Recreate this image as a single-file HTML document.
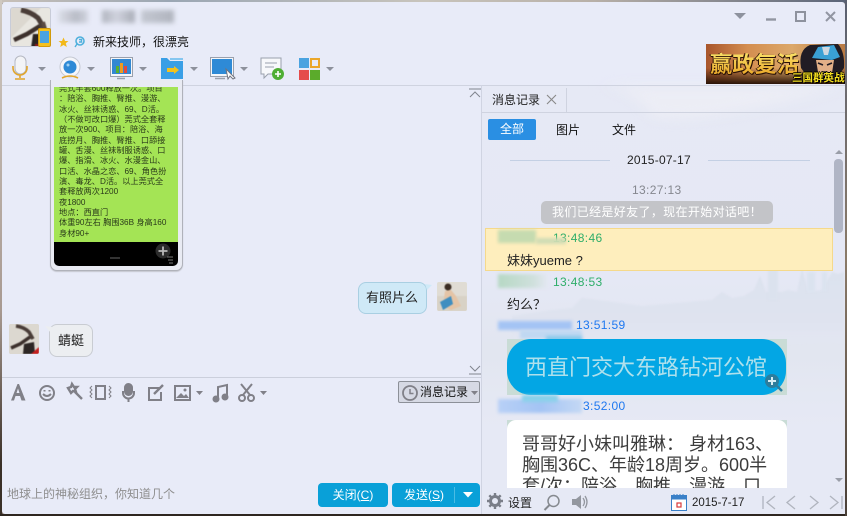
<!DOCTYPE html>
<html lang="zh">
<head>
<meta charset="utf-8">
<style>
html,body{margin:0;padding:0;width:847px;height:516px;overflow:hidden;background:#7a6a60;}
*{box-sizing:border-box;}
body{font-family:"Liberation Sans","Noto Sans CJK SC",sans-serif;font-size:12px;color:#222;position:relative;}
.a{position:absolute;white-space:nowrap;}
svg{position:absolute;overflow:visible;}
.blur{position:absolute;filter:blur(2px);}
.t{letter-spacing:.35px;}
</style>
</head>
<body>
<div class="a" style="left:0;top:0;width:847px;height:3px;background:linear-gradient(90deg,#c8c0b8,#9aa6b4 20%,#c8c4bc 50%,#b8b0a8 70%,#5a6478 100%)"></div>
<div class="a" style="left:0;top:0;width:2px;height:516px;background:linear-gradient(#cfc8c0,#a89a92 60%,#3a3028 90%)"></div>
<div class="a" style="left:0;top:514px;width:847px;height:2px;background:#2e2620"></div>
<div class="a" style="left:845px;top:0;width:2px;height:516px;background:linear-gradient(#5a6070,#8a7a68 50%,#4a4038)"></div>

<!-- window -->
<div class="a" style="left:2px;top:2px;width:843px;height:512px;background:#e8ebf8;border-radius:3px"></div>
<!-- right panel bg -->
<div class="a" style="left:482px;top:86px;width:363px;height:428px;background:linear-gradient(#e6e9f5,#e5e8f5 45%,#e2e6f0 62%,#e6e9f5 80%)"></div>
<svg style="left:482px;top:86px" width="363" height="428">
<defs><linearGradient id="sky" x1="0" y1="0" x2="0" y2="1"><stop offset="0" stop-color="#dbe2ee"/><stop offset=".7" stop-color="#dfe3ef"/><stop offset="1" stop-color="#e2e6f1" stop-opacity="0"/></linearGradient></defs>
<path d="M30 230 L70 224 L90 222 L100 212 L160 220 L230 214 L240 206 L250 212 L262 210 L272 204 L278 190 L284 206 L300 206 L306 204 L315 206 L320 182 L326 206 L340 204 L350 186 L356 188 L362 186 L362 258 L30 262Z" fill="url(#sky)" style="filter:blur(.8px)"/>
<path d="M262 214L286 214 286 178 296 178 296 214Z" fill="#dbe2ee" style="filter:blur(1px)"/>
<path d="M340 205V186h5v19zM325 206V186h8v20z" fill="#dbe3ef" style="filter:blur(1px)"/>
<path d="M110 0 Q150 0 170 30 Q220 40 363 0Z" fill="#ecedf5" style="filter:blur(6px)"/>
</svg>
<div class="a" style="left:2px;top:85px;width:843px;height:1px;background:#cfd3e0"></div>
<div class="a" style="left:481px;top:85px;width:1px;height:429px;background:#d0d4e2"></div>

<!-- avatar -->
<div class="a" style="left:10px;top:7px;width:41px;height:40px;background:#dfdcd6;border:1px solid #c8ccd8;border-radius:3px;overflow:hidden">
<svg width="41" height="40" style="left:0;top:0;filter:blur(.5px)"><rect width="41" height="40" fill="#dcd8d0"/><path d="M0 30L30 0H41V40H0Z" fill="#e8e6e0"/>
<path d="M10 2Q20 4 27 10L33 20" fill="none" stroke="#4a3d38" stroke-width="5"/>
<path d="M29 18L16 26 3 32" fill="none" stroke="#3c302c" stroke-width="4.500"/>
<path d="M32 14L36 28" fill="none" stroke="#5a4a42" stroke-width="4"/>
<path d="M22 26L34 26 36 40 20 40Z" fill="#2a2422"/><path d="M24 36H32V40H24Z" fill="#8c1e1e"/></svg>
</div>
<div class="a" style="left:38px;top:28px;width:13px;height:19px;background:#f4c01e;border-radius:2px;border:1px solid #d09a0c"></div>
<div class="a" style="left:40px;top:31px;width:9px;height:12px;background:#4aa3e0"></div>

<!-- blurred name -->
<div class="blur" style="left:58px;top:10px;width:30px;height:13px;background:linear-gradient(90deg,#dcdfe9,#b8bcc6 60%,#d0d3de);filter:blur(2.500px)"></div>
<div class="blur" style="left:102px;top:10px;width:33px;height:13px;background:linear-gradient(90deg,#b0b4be,#d0d3de 45%,#a8acb6);filter:blur(2.500px)"></div>
<div class="blur" style="left:141px;top:10px;width:33px;height:13px;background:linear-gradient(90deg,#c4c8d2,#b0b4be);filter:blur(2.500px)"></div>

<!-- status icons -->
<svg style="left:58px;top:37px" width="11" height="11" viewBox="0 0 11 11"><path d="M5.500 .5L7 4H10.500L7.800 6.300 8.800 10 5.500 8 2.200 10 3.200 6.300 .5 4H4Z" fill="#f2b91a"/></svg>
<svg style="left:74px;top:36px" width="11" height="12" viewBox="0 0 11 12"><circle cx="6" cy="5" r="4" fill="none" stroke="#4fb0dc" stroke-width="1.600"/><path d="M3 8L1 11M5 3.500h2.500v2.500H5" fill="none" stroke="#4fb0dc" stroke-width="1.400"/></svg>
<div class="a" style="left:93px;top:34px;font-size:12px;line-height:16px;color:#111">新来技师，很漂亮</div>

<!-- top toolbar -->
<svg style="left:0;top:52px" width="340" height="30" viewBox="0 0 340 30">
<rect x="15" y="4" width="11" height="18" rx="5.500" fill="#f3f4f7" stroke="#b5b8c2"/>
<path d="M13 14v2a7 7 0 0 0 14 0v-2M20 23v3M15 27h10" fill="none" stroke="#e0a52b" stroke-width="1.600"/>
<path d="M38 15h8l-4 4z" fill="#8d919c"/>
<circle cx="70" cy="15" r="10" fill="#f5f6fa" stroke="#c4c8d2"/><circle cx="70" cy="15" r="6.500" fill="#2e8ad6"/><circle cx="68" cy="13" r="1.500" fill="#9fd0f2"/>
<path d="M62 26q8-4 16 0" fill="none" stroke="#e0a52b" stroke-width="1.600"/>
<path d="M87 15h8l-4 4z" fill="#8d919c"/>
<rect x="110.500" y="5.500" width="22" height="19" fill="#f4f6fa" stroke="#9aa0ac"/><rect x="112" y="7" width="19" height="15" fill="#3388d2"/>
<rect x="116" y="14" width="3" height="7" fill="#5ab030"/><rect x="120" y="11" width="3" height="10" fill="#f09a1e"/><rect x="124" y="14" width="3" height="7" fill="#e24a3e"/>
<path d="M117 26.500h8" stroke="#9aa0ac" stroke-width="1.500"/>
<path d="M139 15h8l-4 4z" fill="#8d919c"/>
<path d="M161 6h6l3 3h13v18h-22z" fill="#3a9fe6"/><path d="M170 6h13v2h-13z" fill="#85c6f0"/>
<path d="M167 16h7v-2l5 4-5 4v-2h-7z" fill="#f4c21e"/>
<path d="M190 15h8l-4 4z" fill="#8d919c"/>
<rect x="210.500" y="5.500" width="23" height="19" fill="#f4f6fa" stroke="#9aa0ac"/><rect x="212" y="7" width="20" height="15" fill="#2e8ad6"/>
<path d="M226 17l9 9-2 1-3-3-2 3z" fill="#fff" stroke="#707480"/>
<path d="M215 26.500h10" stroke="#9aa0ac" stroke-width="1.500"/>
<path d="M240 15h8l-4 4z" fill="#8d919c"/>
<path d="M261 6h20v16h-13l-4 4v-4h-3z" fill="#f7f8fb" stroke="#9aa0ac"/><path d="M265 11h12M265 15h9" stroke="#9aa0ac"/>
<circle cx="278" cy="22" r="6" fill="#4fae34"/><path d="M275 22h6M278 19v6" stroke="#fff" stroke-width="1.600"/>
<path d="M326 15h8l-4 4z" fill="#8d919c"/>
<rect x="299" y="6" width="10" height="10" fill="#4aa3e0"/><rect x="311" y="7" width="8" height="8" fill="none" stroke="#eba72a" stroke-width="2"/><rect x="299" y="18" width="10" height="10" fill="#e54b4b"/><rect x="310" y="18" width="10" height="10" fill="#5bab2b"/>
</svg>

<!-- window controls -->
<svg style="left:730px;top:8px" width="110" height="20">
<path d="M4 5h12l-6 6z" fill="#8e929e"/>
<path d="M36 11.500h10" stroke="#9296a2" stroke-width="2.400"/>
<rect x="66" y="4" width="9" height="9" fill="none" stroke="#8e929e" stroke-width="2"/>
<path d="M96 4l9 9M105 4l-9 9" stroke="#9296a2" stroke-width="2"/>
</svg>

<!-- banner -->
<div class="a" style="left:706px;top:44px;width:139px;height:40px;overflow:hidden;background:linear-gradient(90deg,#a8552c,#d48e50 30%,#dca86a 62%,#b87a44);">
<div class="a" style="left:0;top:24px;width:139px;height:16px;background:linear-gradient(rgba(58,28,12,0),#2a1408)"></div>
<div class="a" style="left:4px;top:8px;font-size:22px;line-height:26px;font-weight:bold;letter-spacing:.3px;background:linear-gradient(#fbe36a,#e8a020);-webkit-background-clip:text;background-clip:text;color:transparent;filter:drop-shadow(1px 1px 0 #2a1206) drop-shadow(-1px 0 0 #2a1206)">赢政复活</div>
<svg style="left:92px;top:0" width="47" height="40" viewBox="0 0 47 40">
<path d="M3 24Q0 6 12 1L40 0Q47 8 46 24L36 38 12 36Z" fill="#201c24"/>
<path d="M14 14L20 3 36 1 42 13 34 16 24 15Z" fill="#3aa0d4"/>
<path d="M24 3h8l-2 8h-4z" fill="#cfd8e0"/>
<path d="M18 16h18l-2 13-7 4-7-5z" fill="#e2b088"/>
<path d="M20 19l5 2M29 21l5-2M24 28h5" stroke="#201c24" stroke-width="1.600"/>
</svg>
<div class="a" style="left:86px;top:28px;font-size:10.500px;line-height:12px;font-weight:bold;color:#f6e020;text-shadow:1px 1px 0 #000,-1px 0 0 #000,0 -1px 0 #000">三国群英战</div>
</div>

<!-- chat: image card -->
<div class="a" style="left:50px;top:80px;width:133px;height:191px;background:#e9ebf3;border:1.500px solid #b0b2ba;border-top:0;border-radius:0 0 7px 7px;box-shadow:0 1px 1px #c4c6cf"></div>
<div class="a" style="left:54px;top:87px;width:124px;height:179px;background:#000;border-radius:0 0 5px 5px;overflow:hidden">
<div class="a" style="left:0;top:0;width:124px;height:155px;background:#a4e455"></div>
<div class="a" style="left:5px;top:-3px;font-size:8.200px;line-height:10.350px;color:#2a3a1a;white-space:pre">莞式半套600释放一次。项目
：陪浴、胸推、臀推、漫游、
冰火、丝袜诱惑、69、D活。
（不做可改口爆）莞式全套释
放一次900、项目：陪浴、海
底捞月、胸推、臀推、口舔接
罐、舌漫、丝袜制服诱惑、口
爆、指滑、冰火、水漫金山、
口活、水晶之恋、69、角色扮
演、毒龙、D活。以上莞式全
套释放两次1200
夜1800
地点：西直门
体重90左右 胸围36B 身高160
身材90+</div>
<div class="a" style="left:56px;top:170px;width:10px;height:2px;background:#333"></div>
<svg style="left:100px;top:155px" width="22" height="22"><circle cx="9" cy="9" r="7.500" fill="#2c2c2c"/><path d="M4.500 9h9M9 4.500v9" stroke="#b8b8b8" stroke-width="1.800"/><path d="M13 15h6M14 18h5M15 21h4" stroke="#777"/></svg>
</div>

<!-- chat scroll chevrons -->
<svg style="left:468px;top:88px" width="14" height="12"><path d="M1 1h12M2 9l5-5 5 5" fill="none" stroke="#80848e"/></svg>
<svg style="left:468px;top:364px" width="14" height="12"><path d="M1 10h12M2 2l5 5 5-5" fill="none" stroke="#80848e"/></svg>

<!-- bubbles -->
<div class="a" style="left:358px;top:282px;width:69px;height:32px;background:#cfe9f7;border:1px solid #a9cfe2;border-radius:8px;line-height:30px;padding-left:7px;font-size:13px;color:#222">有照片么</div>
<svg style="left:425px;top:282px" width="8" height="8"><path d="M0 2L7 3 2 8Z" fill="#cfe9f7"/></svg>
<div class="a" style="left:437px;top:282px;width:30px;height:29px;background:#e2dfd8;border-radius:2px;overflow:hidden">
<svg width="30" height="29" style="left:0;top:0;filter:blur(.6px)"><rect width="30" height="29" fill="#e0dcd4"/><rect y="14" width="30" height="15" fill="#d8d2c6"/><circle cx="11" cy="5" r="3.500" fill="#3a2c22"/><path d="M8 9L14 8 19 14 24 24 14 28 6 24Z" fill="#e4c4a6"/><path d="M3 20L14 14 16 22 6 28Z" fill="#3f8ec0"/></svg>
</div>

<div class="a" style="left:9px;top:324px;width:30px;height:30px;background:#d8d4cc;border-radius:2px;overflow:hidden">
<svg width="30" height="30" style="left:0;top:0;filter:blur(.5px)"><rect width="30" height="30" fill="#dcd8d0"/>
<path d="M7 2Q15 3 20 8L24 15" fill="none" stroke="#4a3d38" stroke-width="3.500"/>
<path d="M21 13L11 20 2 24" fill="none" stroke="#3c302c" stroke-width="3.500"/>
<path d="M15 20L25 18 26 30H14Z" fill="#2c2624"/><path d="M22 30L30 23 30 30Z" fill="#c42020"/></svg>
</div>
<div class="a" style="left:49px;top:324px;width:44px;height:33px;background:#eceef1;border:1px solid #c9ccd2;border-radius:8px;line-height:31px;padding-left:8px;font-size:13px;color:#222">蜻蜓</div>
<svg style="left:45px;top:326px" width="7" height="8"><path d="M0 0L7 1 6 7Z" fill="#eceef1"/></svg>

<!-- input divider -->
<div class="a" style="left:2px;top:377px;width:479px;height:1px;background:#cbcfdc"></div>

<!-- input toolbar -->
<svg style="left:0;top:381px" width="280" height="24" viewBox="0 0 280 24" fill="none" stroke="#808088" stroke-width="2">
<path d="M11 19.500L17.500 3h1.500l6.500 16.500h-4L20 15h-4.500l-1.500 4.500zM16.500 12h3l-1.500-4.500z" fill="#808088" stroke="none" fill-rule="evenodd"/>
<circle cx="47" cy="12" r="7"/><path d="M43 13q4 4 8 0"/><path d="M44.500 9v1.500M49.500 9v1.500"/>
<path d="M68 7l3-1 1-3 2 3 3 0-2 2 1 3-3-1-2 2zM75 11l7 7" stroke-width="2.400"/>
<rect x="96" y="5" width="9" height="13" stroke-width="2"/><path d="M92 5l-2 2 2 2-2 2 2 2-2 2 2 2M109 5l2 2-2 2 2 2-2 2 2 2-2 2" stroke-width="1"/>
<rect x="125" y="3" width="7" height="11" rx="3.500" fill="#808088"/><path d="M123 10v2a5.500 5.500 0 0 0 11 0v-2M128.500 18v3"/>
<path d="M160 7h-11v12h12v-8"/><path d="M154 13l9-9" stroke-width="2.400"/>
<rect x="175" y="5" width="15" height="14"/><path d="M176 17l5-5 3 3 2-2 3 4z" fill="#808088" stroke="none"/><circle cx="185" cy="9" r="1.500" fill="#808088" stroke="none"/>
<path d="M196 10h7l-3.500 4z" fill="#808088" stroke="none"/>
<path d="M218 18V6l9-2v12"/><circle cx="216" cy="18" r="2.500" fill="#808088"/><circle cx="225" cy="16" r="2.500" fill="#808088"/>
<circle cx="242" cy="17" r="3"/><circle cx="251" cy="17" r="3"/><path d="M243 14l9-11M250 14l-9-11"/>
<path d="M260 10h7l-3.500 4z" fill="#808088" stroke="none"/>
</svg>

<!-- history button -->
<div class="a" style="left:398px;top:381px;width:82px;height:22px;background:#d6d9e4;border:1px solid #8c9098;border-radius:2px"></div>
<svg style="left:401px;top:384px" width="17" height="17"><circle cx="9" cy="9" r="7" fill="none" stroke="#808088" stroke-width="1.800"/><path d="M9 5v4.500h3.500" fill="none" stroke="#808088" stroke-width="1.500"/></svg>
<div class="a" style="left:420px;top:385px;font-size:12px;line-height:15px;color:#111">消息记录</div>
<svg style="left:470px;top:390px" width="9" height="6"><path d="M1 1h7L4.500 5z" fill="#808088"/></svg>

<!-- hint + buttons -->
<div class="a" style="left:7px;top:486px;font-size:12px;line-height:16px;color:#8e8e8e">地球上的神秘组织，你知道几个</div>
<div class="a" style="left:318px;top:483px;width:70px;height:24px;background:#09a0d8;border-radius:4px;color:#fff;text-align:center;line-height:24px;font-size:12px">关闭(<u>C</u>)</div>
<div class="a" style="left:392px;top:483px;width:88px;height:24px;background:#09a0d8;border-radius:4px;color:#fff;line-height:24px;font-size:12px;padding-left:12px">发送(<u>S</u>)</div>
<div class="a" style="left:454px;top:487px;width:1px;height:16px;background:#4bbce4"></div>
<svg style="left:462px;top:491px" width="12" height="8"><path d="M1 1h10L6 6.500z" fill="#fff"/></svg>

<!-- right panel tabs -->
<div class="a" style="left:492px;top:92px;font-size:12px;line-height:16px;color:#222">消息记录</div>
<svg style="left:546px;top:94px" width="11" height="11"><path d="M1 1l9 9M10 1l-9 9" stroke="#888" stroke-width="1.100"/></svg>
<div class="a" style="left:566px;top:88px;width:1px;height:24px;background:#cfd3e0"></div>
<div class="a" style="left:482px;top:112px;width:363px;height:1px;background:#cfd3e0"></div>
<div class="a" style="left:488px;top:119px;width:48px;height:21px;background:#2a8fe3;border-radius:2px;color:#fff;text-align:center;line-height:21px;font-size:12px">全部</div>
<div class="a" style="left:556px;top:122px;line-height:16px;color:#111">图片</div>
<div class="a" style="left:612px;top:122px;line-height:16px;color:#111">文件</div>

<!-- date -->
<div class="a" style="left:510px;top:160px;width:100px;height:1px;background:#c4d0e4"></div>
<div class="a" style="left:708px;top:160px;width:102px;height:1px;background:#c4d0e4"></div>
<div class="a t" style="left:627px;top:152px;line-height:16px;color:#222;letter-spacing:.25px">2015-07-17</div>
<div class="a t" style="left:632px;top:182px;line-height:16px;color:#85878f">13:27:13</div>
<div class="a" style="left:541px;top:201px;width:232px;height:23px;background:#c3c4c8;border-radius:5px;color:#fff;text-align:center;line-height:23px;font-size:12px;letter-spacing:.35px">我们已经是好友了，现在开始对话吧！</div>

<!-- scrollbar -->
<svg style="left:834px;top:148px" width="10" height="8"><path d="M1 6h8L5 2z" fill="#9a9ea8"/></svg>
<div class="a" style="left:834px;top:159px;width:9px;height:74px;background:#b0b5c5;border-radius:4px"></div>
<svg style="left:834px;top:476px" width="10" height="8"><path d="M1 2h8L5 6z" fill="#9a9ea8"/></svg>

<!-- yellow row -->
<div class="a" style="left:485px;top:228px;width:348px;height:43px;background:#feeebd;border:1px solid #f5d98b"></div>
<div class="blur" style="left:498px;top:230px;width:38px;height:13px;background:#c6dbb0;filter:blur(1.500px)"></div>
<div class="a t" style="left:553px;top:230px;line-height:16px;color:#2fae6a">13:48:46</div>
<div class="blur" style="left:536px;top:238px;width:30px;height:6px;background:#d0dcb4;filter:blur(1.500px)"></div>
<div class="a" style="left:507px;top:253px;line-height:16px;font-size:13px;color:#222">妹妹yueme ?</div>

<div class="blur" style="left:498px;top:274px;width:50px;height:14px;background:linear-gradient(90deg,#b6d8c4,#cfe0dc 70%,#e4e8f2);filter:blur(1.500px)"></div>
<div class="a t" style="left:553px;top:274px;line-height:16px;color:#2fae6a">13:48:53</div>
<div class="a" style="left:507px;top:297px;line-height:16px;font-size:13px;color:#222">约么？</div>

<div class="blur" style="left:498px;top:321px;width:74px;height:9px;background:#a4c4f4;filter:blur(1.500px)"></div>
<div class="blur" style="left:520px;top:330px;width:62px;height:9px;background:#c0d8f2;filter:blur(1.500px)"></div>
<div class="blur" style="left:546px;top:336px;width:36px;height:6px;background:#88c8ea;filter:blur(1.500px)"></div>
<div class="a t" style="left:576px;top:317px;line-height:16px;color:#1e78f0">13:51:59</div>

<!-- image 1 -->
<div class="a" style="left:507px;top:339px;width:280px;height:56px;background:#c9dcd6;overflow:hidden">
<div class="a" style="left:0;top:0;width:279px;height:56px;background:#03a6e4;border-radius:24px"></div>
<div class="a" style="left:18px;top:14px;font-size:22px;line-height:30px;color:#aee0ec">西直门交大东路钻河公馆</div>
<svg style="left:257px;top:34px" width="20" height="20"><circle cx="8" cy="8" r="7" fill="#2d7d9c"/><path d="M4 8h8M8 4v8" stroke="#d8eef4" stroke-width="2"/><path d="M13 13l5 5" stroke="#2d7d9c" stroke-width="2.500"/></svg>
</div>

<div class="blur" style="left:498px;top:399px;width:84px;height:14px;background:linear-gradient(90deg,#b8d0f6,#a4c4f4 50%,#c4d8f4);filter:blur(1.500px)"></div>
<div class="blur" style="left:522px;top:395px;width:36px;height:7px;background:#88d0ea;filter:blur(1.500px)"></div>
<div class="a t" style="left:583px;top:398px;line-height:16px;color:#1e78f0">3:52:00</div>

<!-- image 2 -->
<div class="a" style="left:507px;top:420px;width:280px;height:68px;background:#c9dcd6;overflow:hidden">
<div class="a" style="left:0;top:0;width:280px;height:90px;background:#fff;border-radius:9px"></div>
<div class="a" style="left:15px;top:14px;font-size:18px;line-height:21px;color:#3c3c3c;white-space:pre">哥哥好小妹叫雅琳： 身材163、
胸围36C、年龄18周岁。600半
套/次：陪浴、胸推、漫游、口</div>
</div>

<!-- bottom bar -->
<div class="a" style="left:482px;top:488px;width:363px;height:26px;background:#e6e9f5"></div>
<svg style="left:486px;top:492px" width="18" height="18" viewBox="0 0 18 18"><circle cx="9" cy="9" r="4.500" fill="none" stroke="#7a7e88" stroke-width="3"/><path d="M9 1v3M9 14v3M1 9h3M14 9h3M3.300 3.300l2.200 2.200M12.500 12.500l2.200 2.200M14.700 3.300l-2.200 2.200M5.500 12.500l-2.200 2.200" stroke="#7a7e88" stroke-width="2.400"/></svg>
<div class="a" style="left:508px;top:495px;line-height:16px;color:#222">设置</div>
<svg style="left:543px;top:494px" width="18" height="18"><circle cx="10.500" cy="7" r="5.500" fill="none" stroke="#85898f" stroke-width="1.500"/><path d="M6.500 11l-5 5" stroke="#85898f" stroke-width="2"/></svg>
<svg style="left:571px;top:493px" width="18" height="18"><path d="M1 6h4l5-4v14l-5-4H1z" fill="#93979f"/><path d="M12 5q3 4 0 8M14 3q4 6 0 12" fill="none" stroke="#93979f" stroke-width="1.300"/></svg>
<svg style="left:671px;top:494px" width="17" height="18"><rect x=".5" y="1.500" width="15" height="15" fill="#fff" stroke="#3a80c8"/><rect x=".5" y="1.500" width="15" height="4" fill="#3a80c8"/><path d="M3 0v3M6 0v3M9 0v3M12 0v3" stroke="#3a80c8"/><rect x="6" y="9" width="4" height="4" fill="#fff" stroke="#d83a3a" stroke-width="1.200"/></svg>
<div class="a" style="left:692px;top:495px;font-size:11.500px;line-height:16px;color:#222">2015-7-17</div>
<svg style="left:760px;top:495px" width="84" height="16" fill="none" stroke="#b0b4be" stroke-width="1.300">
<path d="M3 1v13M15 1L7 7.500l8 6.500"/><path d="M35 1L27 7.500l8 6.500"/><path d="M50 1l8 6.500-8 6.500"/><path d="M70 1l8 6.500-8 6.500M82 1v13"/>
</svg>
</body>
</html>
